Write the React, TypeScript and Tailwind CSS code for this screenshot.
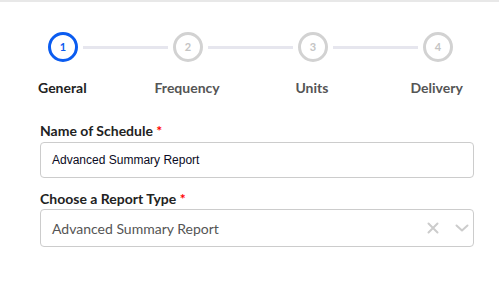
import React from "react";

const steps = ["General", "Frequency", "Units", "Delivery"];

function Circle({ n, active }: { n: number; active: boolean }) {
  return (
    <div
      className={
        "w-[30px] h-[30px] rounded-full border-[3px] flex items-center justify-center text-[11px] font-bold shrink-0 " +
        (active ? "border-[#0b5cf0] text-[#0b5cf0]" : "border-[#d2d2d2] text-[#c4c4c4]")
      }
      style={{ fontFamily: "Lato, sans-serif" }}
    >
      {n}
    </div>
  );
}

export default function App() {
  return (
    <div className="w-[499px] h-[284px] bg-white border-t-2 border-[#e8e8e8] relative overflow-hidden" style={{ fontFamily: "Lato, sans-serif" }}>
      <div className="flex items-center pl-[48px] pr-[46px] mt-[30px]">
        {steps.map((s, i) => (
          <React.Fragment key={s}>
            <Circle n={i + 1} active={i === 0} />
            {i < steps.length - 1 && <div className="flex-1 h-[3px] mx-[5px] bg-[#e6e6ee]" />}
          </React.Fragment>
        ))}
      </div>
      <div className="grid grid-cols-4 mt-[16px]">
        {steps.map((s, i) => (
          <div
            key={s}
            className={"text-center text-[14px] leading-[20px] font-bold " + (i === 0 ? "text-[#222222]" : "text-[#555555]")}
          >
            {s}
          </div>
        ))}
      </div>
      <div className="pl-[40px] pr-[25px] mt-[23px] flex flex-col">
        <label className="text-[14px] leading-[20px] font-bold text-[#222222]">
          Name of Schedule <span className="text-[#ff0000]">*</span>
        </label>
        <div
          className="mt-[1px] h-[36px] border border-[#cccccc] rounded-[4px] flex items-center px-[11px] text-[12px] text-[#0a0a23]"
          style={{ fontFamily: "'Liberation Sans', Arial, sans-serif" }}
        >
          Advanced Summary Report
        </div>
        <label className="mt-[11px] text-[14px] leading-[20px] font-bold text-[#222222]">
          Choose a Report Type <span className="text-[#ff0000]">*</span>
        </label>
        <div className="mt-[0px] h-[38px] border border-[#cccccc] rounded-[4px] flex items-center pl-[11px] pr-[4px] text-[14px] text-[#555555]">
          <span className="flex-1">Advanced Summary Report</span>
          <svg width="12" height="12" viewBox="0 0 12 12" className="mr-[16px]">
            <path d="M1.5 1.5 L10.5 10.5 M10.5 1.5 L1.5 10.5" stroke="#cccccc" strokeWidth="2" strokeLinecap="round" />
          </svg>
          <svg width="14" height="8" viewBox="0 0 14 8">
            <path d="M1.5 1.5 L7 6.5 L12.5 1.5" stroke="#cccccc" strokeWidth="2" fill="none" strokeLinecap="round" strokeLinejoin="round" />
          </svg>
        </div>
      </div>
    </div>
  );
}
